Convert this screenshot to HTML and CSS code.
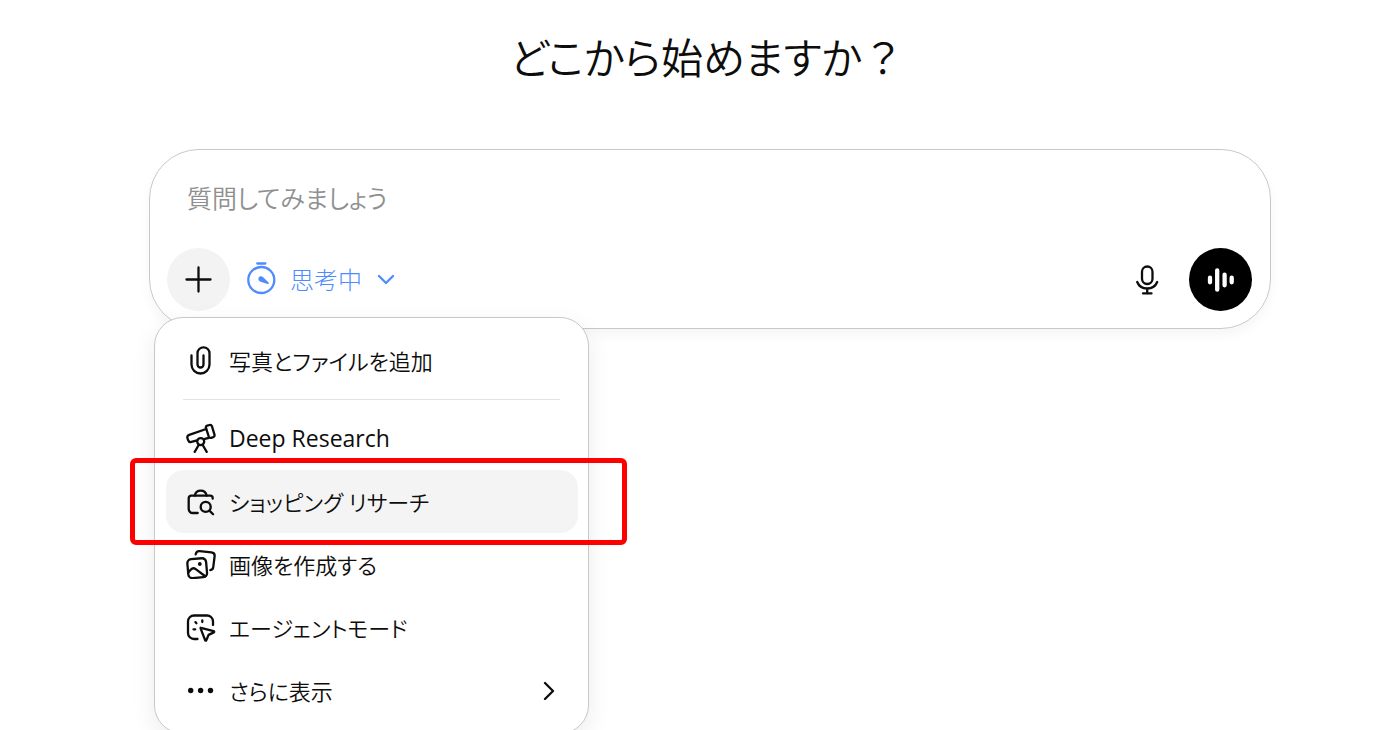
FILE: index.html
```html
<!DOCTYPE html>
<html lang="ja">
<head>
    <meta charset="UTF-8">
    <meta name="viewport" content="width=device-width, initial-scale=1.0">
    <title>どこから始めますか？</title>
    <link rel="stylesheet" href="styles.css">
</head>
<body>
    <main>
        <h1>どこから始めますか<span class="wide">？</span></h1>

        <!-- Prompt box -->
        <form class="composer">
            <input type="text" class="prompt" placeholder="質問してみましょう" aria-label="質問してみましょう">
            <div class="toolbar">
                <button type="button" class="round-btn plus-btn" aria-label="追加">
                    <svg width="30" height="30" viewBox="0 0 30 30"><path d="M14.500 2.500v24M2.500 14.500h24"/></svg>
                </button>
                <button type="button" class="mode-btn">
                    <svg width="30" height="34" viewBox="0 0 30 34">
                        <circle cx="15.300" cy="19" r="13"/>
                        <path d="M11.300 2.500h8"/>
                        <path class="fill" d="M12.600 16.700c1-1.600 3.100-1.800 4.600-.5l5.400 5.400c.7.800 0 1.700-1 1.400l-7-2.300c-2-.6-2.700-2.400-2-4z"/>
                    </svg>
                    <span>思考中</span>
                    <svg width="18" height="18" viewBox="0 0 18 18"><path d="M2 7l7 7 7-7"/></svg>
                </button>
                <button type="button" class="mic-btn" aria-label="音声入力">
                    <svg width="30" height="30" viewBox="0 0 30 30">
                        <rect x="10" y="1.500" width="10.500" height="17.500" rx="5.200"/>
                        <path d="M5.200 17c1.600 4 5.500 6.500 10 6.500s8.400-2.500 10-6.500M15.200 23.500v5M11 28.400h8.500"/>
                    </svg>
                </button>
                <button type="button" class="round-btn voice-btn" aria-label="音声モード">
                    <svg width="30" height="30" viewBox="0 0 30 30"><path d="M4 12.700v4.600M11.200 5.300v19.400M18.600 9.700v10.600M25.700 12.700v4.600"/></svg>
                </button>
            </div>

            <!-- Menu opened from the plus button -->
            <div class="menu" role="menu">
                <button type="button" class="menu-item" role="menuitem">
                    <svg width="30" height="30" viewBox="0 0 30 30"><path d="M5.500 10.500v9a9 9 0 0 0 18 0V8.300a6 6 0 0 0-12 0v11.200a3 3 0 0 0 6 0v-9"/></svg>
                    <span>写真とファイルを追加</span>
                </button>
                <hr>
                <button type="button" class="menu-item" role="menuitem">
                    <svg width="30" height="30" viewBox="0 0 30 30">
                        <path d="M21.200 2.700l2.400-.7c1.100-.3 1.900.1 2.300 1.200l2.600 8.500c.3 1.200-.1 2-1.200 2.400l-2.200.7c-1.100.3-1.900-.1-2.300-1.200L20 5.100c-.4-1.200 0-2 1.200-2.400z"/>
                        <path d="M20.200 6L3.200 11.900c-1.500.6-2.200 1.900-1.700 3.400l.6 1.900c.5 1.500 1.800 2.100 3.300 1.700l5.800-1.600M18 16.200l4.800-1.400"/>
                        <circle cx="14.700" cy="18.600" r="3.500"/>
                        <path d="M12.700 22l-4 6.800M16.700 22l4 6.800"/>
                    </svg>
                    <span class="latin">Deep Research</span>
                </button>
                <button type="button" class="menu-item active" role="menuitem">
                    <svg width="30" height="30" viewBox="0 0 30 30">
                        <path d="M26.700 12.700v-.5a2.500 2.500 0 0 0-2.500-2.500h-19A2.500 2.500 0 0 0 2.700 12.200V23a4 4 0 0 0 4 4h5"/>
                        <path d="M8.800 9.500a6 6 0 0 1 11.800 0"/>
                        <circle cx="19.700" cy="20.900" r="5"/>
                        <path d="M23.400 24.600l3.700 3.600"/>
                    </svg>
                    <span>ショッピング リサーチ</span>
                    <i class="highlight"></i>
                </button>
                <button type="button" class="menu-item" role="menuitem">
                    <svg width="30" height="30" viewBox="0 0 30 30">
                        <rect x="1.800" y="9.700" width="18.800" height="19" rx="4" transform="rotate(-5 11.200 19.200)"/>
                        <path d="M9.700 5.300c.5-2.300 1.700-3.500 4-3.200l11.700 1.300c2.300.3 3.500 1.600 3.200 3.900l-1.300 10.500c-.2 1.900-1.300 3-3 3.300"/>
                        <path d="M2.300 23.600l2.600-3c1.400-1.500 3.200-1.600 4.800-.4l9.500 7"/>
                        <circle class="fill" cx="13.800" cy="15" r="1.900"/>
                    </svg>
                    <span>画像を作成する</span>
                </button>
                <button type="button" class="menu-item" role="menuitem">
                    <svg width="30" height="30" viewBox="0 0 30 30">
                        <path d="M11.500 27H8a6 6 0 0 1-6-6V9.500a6 6 0 0 1 6-6h13a6 6 0 0 1 6 6V13"/>
                        <path d="M15 15.800l12.600 3.400c.7.200.8.900.2 1.200l-5.200 2.500-2.300 5.300c-.3.700-1 .6-1.200-.1L14.600 16.300c-.1-.4.100-.6.400-.5z"/>
                        <path d="M9.400 10.100l1 1.100M16.300 8.300v1.700M7.500 17.300h1.700"/>
                    </svg>
                    <span>エージェントモード</span>
                </button>
                <button type="button" class="menu-item" role="menuitem">
                    <svg width="30" height="30" viewBox="0 0 30 30">
                        <circle class="fill" cx="4.700" cy="15.500" r="2.700"/>
                        <circle class="fill" cx="14.600" cy="15.500" r="2.700"/>
                        <circle class="fill" cx="24.500" cy="15.500" r="2.700"/>
                    </svg>
                    <span>さらに表示</span>
                    <svg class="arrow" width="20" height="20" viewBox="0 0 20 20"><path d="M7 3l8 8-8 8"/></svg>
                </button>
            </div>
        </form>
    </main>
</body>
</html>
```
FILE: styles.css
```css
* {
    box-sizing: border-box;
}
body {
    margin: 0;
    min-height: 100vh;
    overflow: hidden;
    background-color: #fff;
    color: #0d0d0d;
    font-family: "Open Sans", "Noto Sans CJK JP", sans-serif;
    font-feature-settings: "palt";
    font-weight: 350;
}
main {
    padding: 24px 125px 0 149px;
}
h1 {
    margin: 0 0 57px;
    padding-right: 6px;
    font-size: 42px;
    line-height: 68px;
    font-weight: 350;
    text-align: center;
}
.wide {
    font-feature-settings: normal;
}
button,
input {
    border: 0;
    padding: 0;
    background: none;
    color: inherit;
    font: inherit;
    font-feature-settings: inherit;
}
button {
    cursor: pointer;
}
svg {
    flex: none;
    fill: none;
    stroke: currentColor;
    stroke-width: 2.3;
    stroke-linecap: round;
    stroke-linejoin: round;
}
svg .fill {
    fill: currentColor;
    stroke: none;
}

/* Prompt box */
.composer {
    position: relative;
    padding: 17px 18px 17px 17px;
    border: 1px solid #c8c8c8;
    border-radius: 50px;
    box-shadow: 0 6px 12px rgba(0, 0, 0, 0.04);
}
.prompt {
    display: block;
    width: 100%;
    height: 63px;
    margin-bottom: 18px;
    padding: 0 20px 2px;
    font-size: 25px;
    outline: none;
}
.prompt::placeholder {
    color: #8f8f8f;
    opacity: 1;
}
.toolbar {
    display: flex;
    align-items: center;
}
.round-btn {
    display: flex;
    align-items: center;
    justify-content: center;
    width: 63px;
    height: 63px;
    border-radius: 50%;
}
.plus-btn {
    background-color: #f3f3f3;
}
.mode-btn {
    display: flex;
    align-items: center;
    margin-left: 16px;
    padding-bottom: 3px;
    color: #4d8bff;
    font-size: 24px;
    font-weight: 300;
}
.mode-btn span {
    margin: 0 15px 0 14px;
}
.mic-btn {
    display: flex;
    margin-left: auto;
    margin-right: 27px;
}
.voice-btn {
    background-color: #000;
    color: #fff;
}
.voice-btn svg {
    stroke-width: 4.3;
}

/* Menu */
.menu {
    position: absolute;
    top: 167px;
    left: 4px;
    width: 435px;
    padding: 11px 10px 11px 11px;
    border: 1px solid #c8c8c8;
    border-radius: 29px;
    background-color: #fff;
    box-shadow: 0 8px 24px rgba(0, 0, 0, 0.08);
}
.menu hr {
    height: 1px;
    margin: 7px 18px 7px 17px;
    border: 0;
    background-color: #e3e3e3;
}
.menu-item {
    position: relative;
    display: flex;
    align-items: center;
    gap: 13px;
    width: 100%;
    height: 63px;
    padding: 0 20px 2px;
    border-radius: 18px;
    font-size: 22px;
    text-align: left;
}
.menu-item.active {
    background-color: #f4f4f4;
}
.latin {
    font-size: 23px;
    font-weight: 400;
}
.arrow {
    margin-left: auto;
}

/* Red frame around the active item */
.highlight {
    position: absolute;
    inset: -12px -49px -12px -36px;
    z-index: 1;
    border: 5px solid #f00;
    border-radius: 6px;
    pointer-events: none;
}
```
